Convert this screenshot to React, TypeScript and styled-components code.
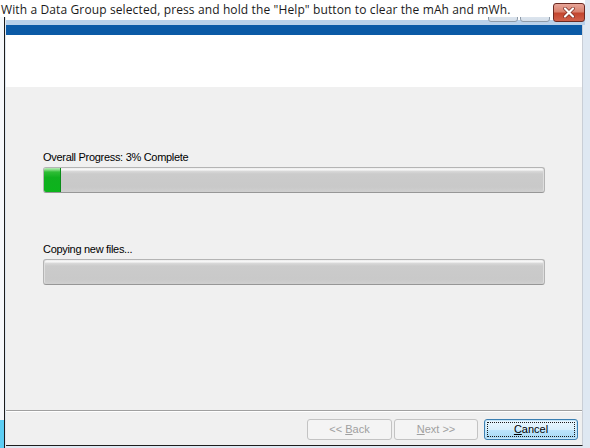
import styled, { createGlobalStyle } from "styled-components";

const GlobalStyle = createGlobalStyle`
  html, body {
    margin: 0;
    padding: 0;
    background: #ffffff;
  }
  body {
    width: 590px;
    height: 448px;
    overflow: hidden;
  }
`;

const Screen = styled.div`
  position: relative;
  display: flex;
  width: 590px;
  height: 448px;
  overflow: hidden;
  background: #ffffff;
`;

const Desktop = styled.div`
  display: flex;
  flex-direction: column;
  width: 4px;
`;

const DesktopTop = styled.div`
  flex: 1;
  background: #f6f8fb;
`;

const Taskbar = styled.div`
  height: 28px;
  background: #5ccdf3;
`;

const Window = styled.div`
  flex: 1;
  display: flex;
  flex-direction: column;
  border-left: 1px solid #1c1c1c;
  padding: 0 5px 2px 1px;
  background: #dfe8f2;
`;

const TitleBar = styled.div`
  height: 25px;
  box-sizing: border-box;
  display: flex;
  justify-content: flex-end;
  align-items: flex-start;
  gap: 2px;
  padding: 3px 0 0;
  background: linear-gradient(to bottom, #ffffff 0, #ffffff 20px, #b9d1ea 20px);
`;

const CaptionButton = styled.div<{ $close?: boolean }>`
  width: ${(p) => (p.$close ? 32 : 30)}px;
  height: 19px;
  box-sizing: border-box;
  display: flex;
  align-items: center;
  justify-content: center;
  border: 1px solid ${(p) => (p.$close ? "#6b2a22" : "#8d9aa8")};
  border-radius: 3px;
  background: ${(p) =>
    p.$close
      ? "linear-gradient(to bottom, #e8a598 0, #d9826f 45%, #c4462f 55%, #d0604a 100%)"
      : "linear-gradient(to bottom, #f4f7fb 0, #e3eaf2 50%, #d5dfea 100%)"};
  margin-left: ${(p) => (p.$close ? 1 : 0)}px;
`;

const Dialog = styled.div`
  flex: 1;
  display: flex;
  flex-direction: column;
  margin-right: 2px;
  background: #f0f0f0;
  border-bottom: 1px solid #1e1e1e;
  border-right: 1px solid #c9ced6;
`;

const BlueBar = styled.div`
  height: 10px;
  background: #0b5aa6;
`;

const Header = styled.div`
  height: 52px;
  background: #ffffff;
`;

const Body = styled.div`
  flex: 1;
  display: flex;
  flex-direction: column;
  padding: 63px 37px 0 37px;
`;

const Group = styled.div<{ $gap: number }>`
  display: flex;
  flex-direction: column;
  gap: 3px;
  margin-top: ${(p) => p.$gap}px;
`;

const Label = styled.div`
  font-family: "Liberation Sans", Arial, sans-serif;
  font-size: 11px;
  letter-spacing: -0.3px;
  line-height: 14px;
  color: #000000;
`;

const Track = styled.div`
  height: 26px;
  box-sizing: border-box;
  display: flex;
  overflow: hidden;
  border: 1px solid #b4b4b4;
  border-bottom-color: #979797;
  border-radius: 3px;
  background: linear-gradient(
    to bottom,
    #ececec 0,
    #f9f9f9 2px,
    #dadada 3px,
    #cbcbcb 6px,
    #c9c9c9 80%,
    #d0d0d0 100%
  );
  box-shadow: inset 1px 0 0 #dedede, inset -1px 0 0 #dedede;
`;

const Fill = styled.div`
  height: 100%;
  box-sizing: border-box;
  border-right: 1px solid #0b8c19;
  background: linear-gradient(
    to bottom,
    #b5ecb5 0,
    #7ddb7d 2px,
    #2fbd36 4px,
    #10b01f 40%,
    #0cb41c 100%
  );
`;

const Separator = styled.div`
  height: 2px;
  box-sizing: border-box;
  border-top: 1px solid #a0a0a0;
  border-bottom: 1px solid #ffffff;
`;

const Footer = styled.div`
  height: 33px;
  box-sizing: border-box;
  display: flex;
  justify-content: flex-end;
  align-items: flex-start;
  gap: 2px;
  padding: 7px 4px 0 0;
`;

const WizardButton = styled.div<{ $width: number; $default?: boolean; $disabled?: boolean }>`
  width: ${(p) => p.$width}px;
  height: 21px;
  box-sizing: border-box;
  display: flex;
  padding: 2px;
  margin-left: ${(p) => (p.$default ? 4 : 0)}px;
  border-radius: 3px;
  font-family: "Liberation Sans", Arial, sans-serif;
  font-size: 11px;
  color: ${(p) => (p.$disabled ? "#a0a0a0" : "#000000")};
  border: 1px solid ${(p) => (p.$default ? "#3c7fb1" : p.$disabled ? "#c3c3c3" : "#707070")};
  background: ${(p) =>
    p.$default
      ? "linear-gradient(to bottom, #eaf6fd 0, #d9f0fc 50%, #bee6fd 51%, #a7d9f5 100%)"
      : p.$disabled
      ? "#f4f4f4"
      : "linear-gradient(to bottom, #f2f2f2 0, #ebebeb 50%, #dddddd 51%, #cfcfcf 100%)"};
  box-shadow: ${(p) => (p.$default ? "inset 0 0 0 1px #c6e6f8" : "none")};
`;

const Caption = styled.span<{ $focused?: boolean }>`
  flex: 1;
  display: flex;
  align-items: center;
  justify-content: center;
  border: 1px dotted ${(p) => (p.$focused ? "#1a1a1a" : "transparent")};
  line-height: 13px;
`;

const Tooltip = styled.div`
  position: absolute;
  top: 0;
  left: 0;
  width: 552px;
  height: 17px;
  padding: 1px 0 0 1px;
  box-sizing: border-box;
  background: #ffffff;
  font-family: "Open Sans", "Noto Sans", sans-serif;
  font-size: 12px;
  letter-spacing: 0.12px;
  line-height: 17px;
  color: #1a1a1a;
  white-space: nowrap;
`;

const CloseGlyph = () => (
  <svg width="14" height="11" viewBox="0 0 14 11">
    <path d="M3 1.5 L11 9.5 M11 1.5 L3 9.5" stroke="#7a2a20" strokeWidth="3.6" strokeLinecap="round" />
    <path d="M3 1.5 L11 9.5 M11 1.5 L3 9.5" stroke="#ffffff" strokeWidth="2.2" strokeLinecap="round" />
  </svg>
);

const steps = [
  { label: "Overall Progress: 3% Complete", value: 3.4, gap: 0 },
  { label: "Copying new files...", value: 0, gap: 49 },
];

const App = () => {
  return (
    <Screen>
      <GlobalStyle />
      <Desktop>
        <DesktopTop />
        <Taskbar />
      </Desktop>
      <Window>
        <TitleBar>
          <CaptionButton />
          <CaptionButton />
          <CaptionButton $close>
            <CloseGlyph />
          </CaptionButton>
        </TitleBar>
        <Dialog>
          <BlueBar />
          <Header />
          <Body>
            {steps.map((s) => (
              <Group key={s.label} $gap={s.gap}>
                <Label>{s.label}</Label>
                <Track>
                  {s.value > 0 && <Fill style={{ width: `${s.value}%` }} />}
                </Track>
              </Group>
            ))}
          </Body>
          <Separator />
          <Footer>
            <WizardButton $width={85} $disabled>
              <Caption>
                &lt;&lt;&nbsp;<u>B</u>ack
              </Caption>
            </WizardButton>
            <WizardButton $width={84} $disabled>
              <Caption>
                <u>N</u>ext &gt;&gt;
              </Caption>
            </WizardButton>
            <WizardButton $width={94} $default>
              <Caption $focused>
                <u>C</u>ancel
              </Caption>
            </WizardButton>
          </Footer>
        </Dialog>
      </Window>
      <Tooltip>
        With a Data Group selected, press and hold the "Help" button to clear the mAh and mWh.
      </Tooltip>
    </Screen>
  );
};

export default App;
